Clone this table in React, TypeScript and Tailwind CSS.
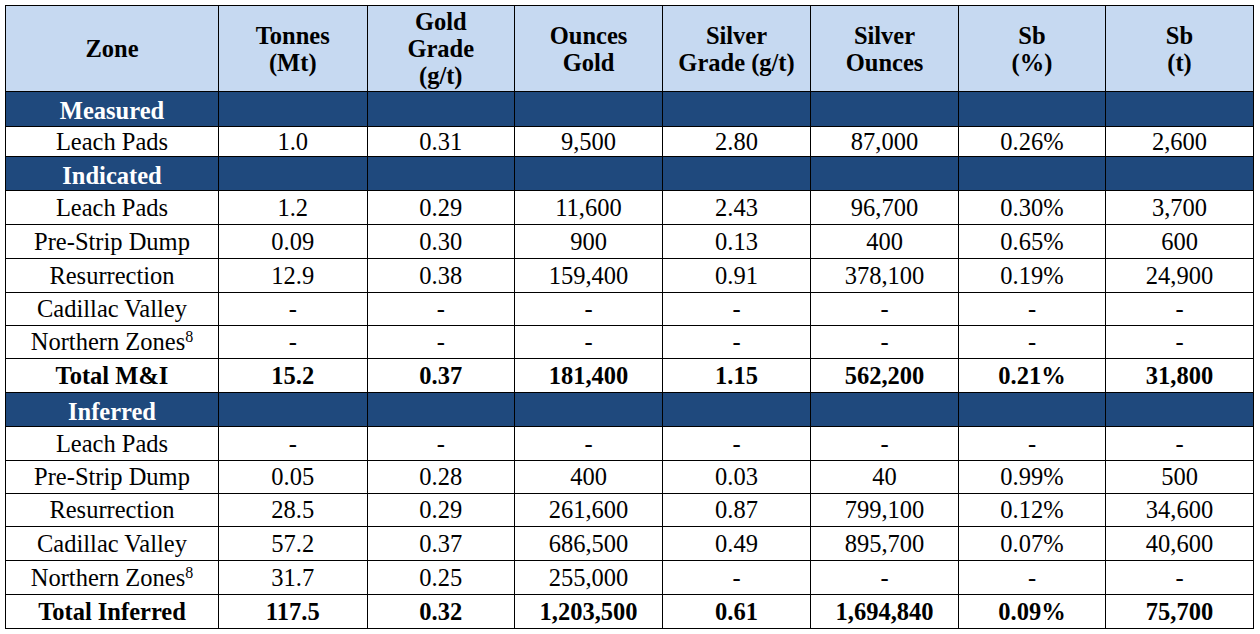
import React from "react";

type Row =
  | { kind: "section"; label: string; h: number }
  | { kind: "data"; cells: string[]; h: number; bold?: boolean; sup?: boolean; noY?: boolean };

const D = ["-", "-", "-", "-", "-", "-", "-"];

const rows: Row[] = [
  { kind: "section", label: "Measured", h: 35 },
  { kind: "data", cells: ["Leach Pads", "1.0", "0.31", "9,500", "2.80", "87,000", "0.26%", "2,600"], h: 30, noY: true },
  { kind: "section", label: "Indicated", h: 34 },
  { kind: "data", cells: ["Leach Pads", "1.2", "0.29", "11,600", "2.43", "96,700", "0.30%", "3,700"], h: 34 },
  { kind: "data", cells: ["Pre-Strip Dump", "0.09", "0.30", "900", "0.13", "400", "0.65%", "600"], h: 34 },
  { kind: "data", cells: ["Resurrection", "12.9", "0.38", "159,400", "0.91", "378,100", "0.19%", "24,900"], h: 34 },
  { kind: "data", cells: ["Cadillac Valley", ...D], h: 33 },
  { kind: "data", cells: ["Northern Zones", ...D], h: 33, sup: true },
  { kind: "data", cells: ["Total M&I", "15.2", "0.37", "181,400", "1.15", "562,200", "0.21%", "31,800"], h: 34, bold: true },
  { kind: "section", label: "Inferred", h: 34 },
  { kind: "data", cells: ["Leach Pads", ...D], h: 34 },
  { kind: "data", cells: ["Pre-Strip Dump", "0.05", "0.28", "400", "0.03", "40", "0.99%", "500"], h: 33 },
  { kind: "data", cells: ["Resurrection", "28.5", "0.29", "261,600", "0.87", "799,100", "0.12%", "34,600"], h: 33 },
  { kind: "data", cells: ["Cadillac Valley", "57.2", "0.37", "686,500", "0.49", "895,700", "0.07%", "40,600"], h: 34 },
  { kind: "data", cells: ["Northern Zones", "31.7", "0.25", "255,000", "-", "-", "-", "-"], h: 34, sup: true },
  { kind: "data", cells: ["Total Inferred", "117.5", "0.32", "1,203,500", "0.61", "1,694,840", "0.09%", "75,700"], h: 34, bold: true },
];

const widths = [213, 148.5, 147.5, 148, 148, 148, 147, 148];

const headers: React.ReactNode[] = [
  "Zone",
  <>Tonnes<br />(Mt)</>,
  <>Gold<br />Grade<br />(g/t)</>,
  <>Ounces<br />Gold</>,
  <>Silver<br />Grade (g/t)</>,
  <>Silver<br />Ounces</>,
  <>Sb<br />(%)</>,
  <>Sb<br />(t)</>,
];

export default function App() {
  return (
    <div className="min-h-screen bg-white pl-[5px] pt-[5px] text-black font-['Liberation_Serif',serif]">
      <table className="table-fixed border-collapse font-['Liberation_Serif',serif] text-[24.5px] leading-[28px]" style={{ width: 1249 }}>
        <colgroup>
          {widths.map((w, i) => (
            <col key={i} style={{ width: w }} />
          ))}
        </colgroup>
        <thead>
          <tr className="h-[86px] bg-[#c6d9f1]">
            {headers.map((h, i) => (
              <th key={i} className="border border-black p-0 text-center align-middle font-bold leading-[27px]">
                {h}
              </th>
            ))}
          </tr>
        </thead>
        <tbody>
          {rows.map((r, ri) =>
            r.kind === "section" ? (
              <tr key={ri} className="bg-[#1f497d]" style={{ height: r.h }}>
                <td className="border border-black p-0 pt-[4px] text-center align-middle font-bold text-white">{r.label}</td>
                {Array.from({ length: 7 }).map((_, i) => (
                  <td key={i} className="border border-black p-0" />
                ))}
              </tr>
            ) : (
              <tr key={ri} className="bg-white" style={{ height: r.h }}>
                {r.cells.map((c, i) => (
                  <td
                    key={i}
                    className={
                      "border-x border-black p-0 text-center align-middle whitespace-nowrap " +
                      (r.noY ? "border-y-0 " : "border-y ") +
                      (r.bold ? "font-bold" : "font-normal")
                    }
                  >
                    {c}
                    {i === 0 && r.sup ? <sup className="text-[16px]">8</sup> : null}
                  </td>
                ))}
              </tr>
            )
          )}
        </tbody>
      </table>
    </div>
  );
}
